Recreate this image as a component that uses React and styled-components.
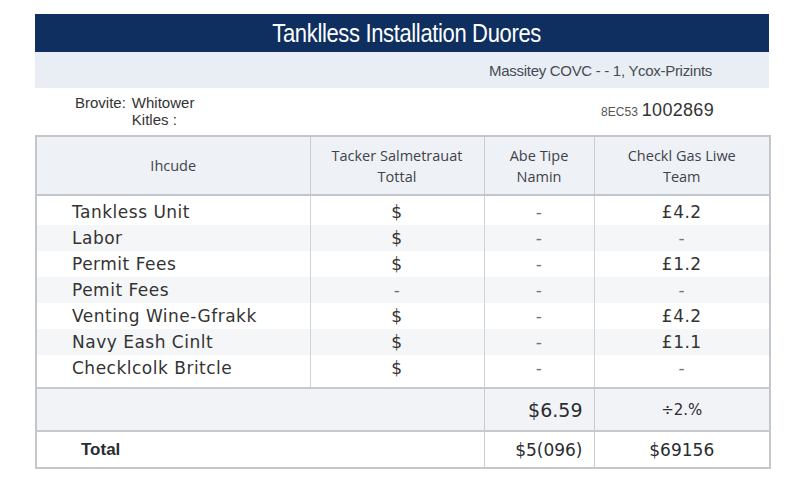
import React from 'react';
import styled, { createGlobalStyle } from 'styled-components';

const GlobalStyle = createGlobalStyle`
  html, body {
    margin: 0;
    padding: 0;
    background: #ffffff;
  }
`;

const Page = styled.div`
  width: 734px;
  padding: 14px 31px 0 35px;
  font-family: 'Liberation Sans', Arial, sans-serif;
  color: #333;
`;

const TitleBar = styled.div`
  height: 38px;
  background: #0e2f5f;
  color: #fff;
  display: flex;
  align-items: center;
  justify-content: center;
  padding-left: 10px;
`;

const Title = styled.span`
  display: inline-block;
  font-family: 'Liberation Sans', sans-serif;
  font-size: 25px;
  letter-spacing: -0.4px;
  transform: scaleX(0.88);
`;

const InfoBand = styled.div`
  height: 36px;
  background: #e9eef5;
  display: flex;
  align-items: center;
  justify-content: flex-end;
  padding-right: 57px;
  font-size: 15px;
  color: #474b52;
  letter-spacing: -0.3px;
`;

const MetaRow = styled.div`
  height: 47px;
  display: flex;
  justify-content: space-between;
  align-items: center;
  padding: 0 55px 0 40px;
`;

const MetaGrid = styled.div`
  display: grid;
  grid-template-columns: auto auto;
  column-gap: 6px;
  font-size: 15px;
  line-height: 17px;
  color: #333;
  margin-top: -1px;
`;

const RefNo = styled.div`
  display: flex;
  align-items: baseline;
  gap: 4px;
  color: #333;
  margin-top: -2px;
`;

const RefCode = styled.span`
  font-size: 12px;
  color: #555;
`;

const RefNum = styled.span`
  font-size: 18px;
  letter-spacing: 0.3px;
`;

const Table = styled.table`
  width: 734px;
  border-collapse: collapse;
  table-layout: fixed;
  border: 2px solid #c3c6cb;
`;

const HeadCell = styled.th`
  height: 55px;
  background: #eef1f6;
  border-bottom: 2px solid #c3c6cb;
  border-left: 1.5px solid #c9ccd1;
  font-weight: normal;
  font-family: 'Open Sans', 'Liberation Sans', sans-serif;
  font-size: 14.5px;
  line-height: 21px;
  color: #40434a;
  text-align: center;
  &:first-child { border-left: none; }
`;

const Row = styled.tr`
  background: ${p => (p.$shade ? '#f5f6f8' : '#ffffff')};
`;

const Cell = styled.td`
  height: 26px;
  padding: ${p => (p.$first ? '3px' : '0')} 0 ${p => (p.$last ? '6px' : '0')} ${p => (p.$item ? '35px' : '0')};
  border-left: 1.5px solid #d0d3d7;
  font-family: 'DejaVu Sans', Verdana, sans-serif;
  font-size: 17px;
  letter-spacing: 0.5px;
  color: ${p => (p.$muted ? '#777' : '#333')};
  text-align: ${p => (p.$item ? 'left' : 'center')};
  &:first-child { border-left: none; }
`;

const SumRow = styled.tr`
  background: ${p => (p.$shade ? '#f1f3f6' : '#ffffff')};
  border-top: 2px solid #c6c9ce;
`;

const SumCell = styled.td`
  height: ${p => p.$h}px;
  padding: 0 ${p => (p.$right ? '11px' : '0')} 0 ${p => (p.$label ? '44px' : '0')};
  border-left: 1.5px solid #c9ccd1;
  font-family: ${p => (p.$label ? "'Liberation Sans', Arial, sans-serif" : "'DejaVu Sans', Verdana, sans-serif")};
  font-weight: ${p => (p.$bold ? 'bold' : 'normal')};
  font-size: ${p => p.$size || 17}px;
  color: #2a2c30;
  text-align: ${p => (p.$right ? 'right' : p.$label ? 'left' : 'center')};
  &:first-child { border-left: none; }
`;

const rows = [
  ['Tankless Unit', '$', '-', '£4.2'],
  ['Labor', '$', '-', '-'],
  ['Permit Fees', '$', '-', '£1.2'],
  ['Pemit Fees', '-', '-', '-'],
  ['Venting Wine-Gfrakk', '$', '-', '£4.2'],
  ['Navy Eash Cinlt', '$', '-', '£1.1'],
  ['Checklcolk Britcle', '$', '-', '-'],
];

export default function App() {
  return (
    <>
      <GlobalStyle />
      <Page>
        <TitleBar>
          <Title>Tanklless Installation Duores</Title>
        </TitleBar>
        <InfoBand>Massitey COVC - - 1, Ycox-Prizints</InfoBand>
        <MetaRow>
          <MetaGrid>
            <span>Brovite:</span>
            <span>Whitower</span>
            <span />
            <span>Kitles :</span>
          </MetaGrid>
          <RefNo>
            <RefCode>8EC53</RefCode>
            <RefNum>1002869</RefNum>
          </RefNo>
        </MetaRow>
        <Table>
          <colgroup>
            <col style={{ width: 274 }} />
            <col style={{ width: 174 }} />
            <col style={{ width: 110 }} />
            <col style={{ width: 176 }} />
          </colgroup>
          <thead>
            <tr>
              <HeadCell>Ihcude</HeadCell>
              <HeadCell>Tacker Salmetrauat<br />Tottal</HeadCell>
              <HeadCell>Abe Tipe<br />Namin</HeadCell>
              <HeadCell>Checkl Gas Liwe<br />Team</HeadCell>
            </tr>
          </thead>
          <tbody>
            {rows.map((r, i) => {
              const first = i === 0;
              const last = i === rows.length - 1;
              return (
                <Row key={i} $shade={i % 2 === 1}>
                  <Cell $item $first={first} $last={last}>{r[0]}</Cell>
                  <Cell $first={first} $last={last} $muted={r[1] === '-'}>{r[1]}</Cell>
                  <Cell $first={first} $last={last} $muted>{r[2]}</Cell>
                  <Cell $first={first} $last={last} $muted={r[3] === '-'}>{r[3]}</Cell>
                </Row>
              );
            })}
            <SumRow $shade>
              <SumCell colSpan={2} $h={41} />
              <SumCell $h={41} $right $size={19}>$6.59</SumCell>
              <SumCell $h={41} $size={15}>÷2.%</SumCell>
            </SumRow>
            <SumRow>
              <SumCell colSpan={2} $h={35} $label $bold>Total</SumCell>
              <SumCell $h={35} $right>$5(096)</SumCell>
              <SumCell $h={35}>$69156</SumCell>
            </SumRow>
          </tbody>
        </Table>
      </Page>
    </>
  );
}
